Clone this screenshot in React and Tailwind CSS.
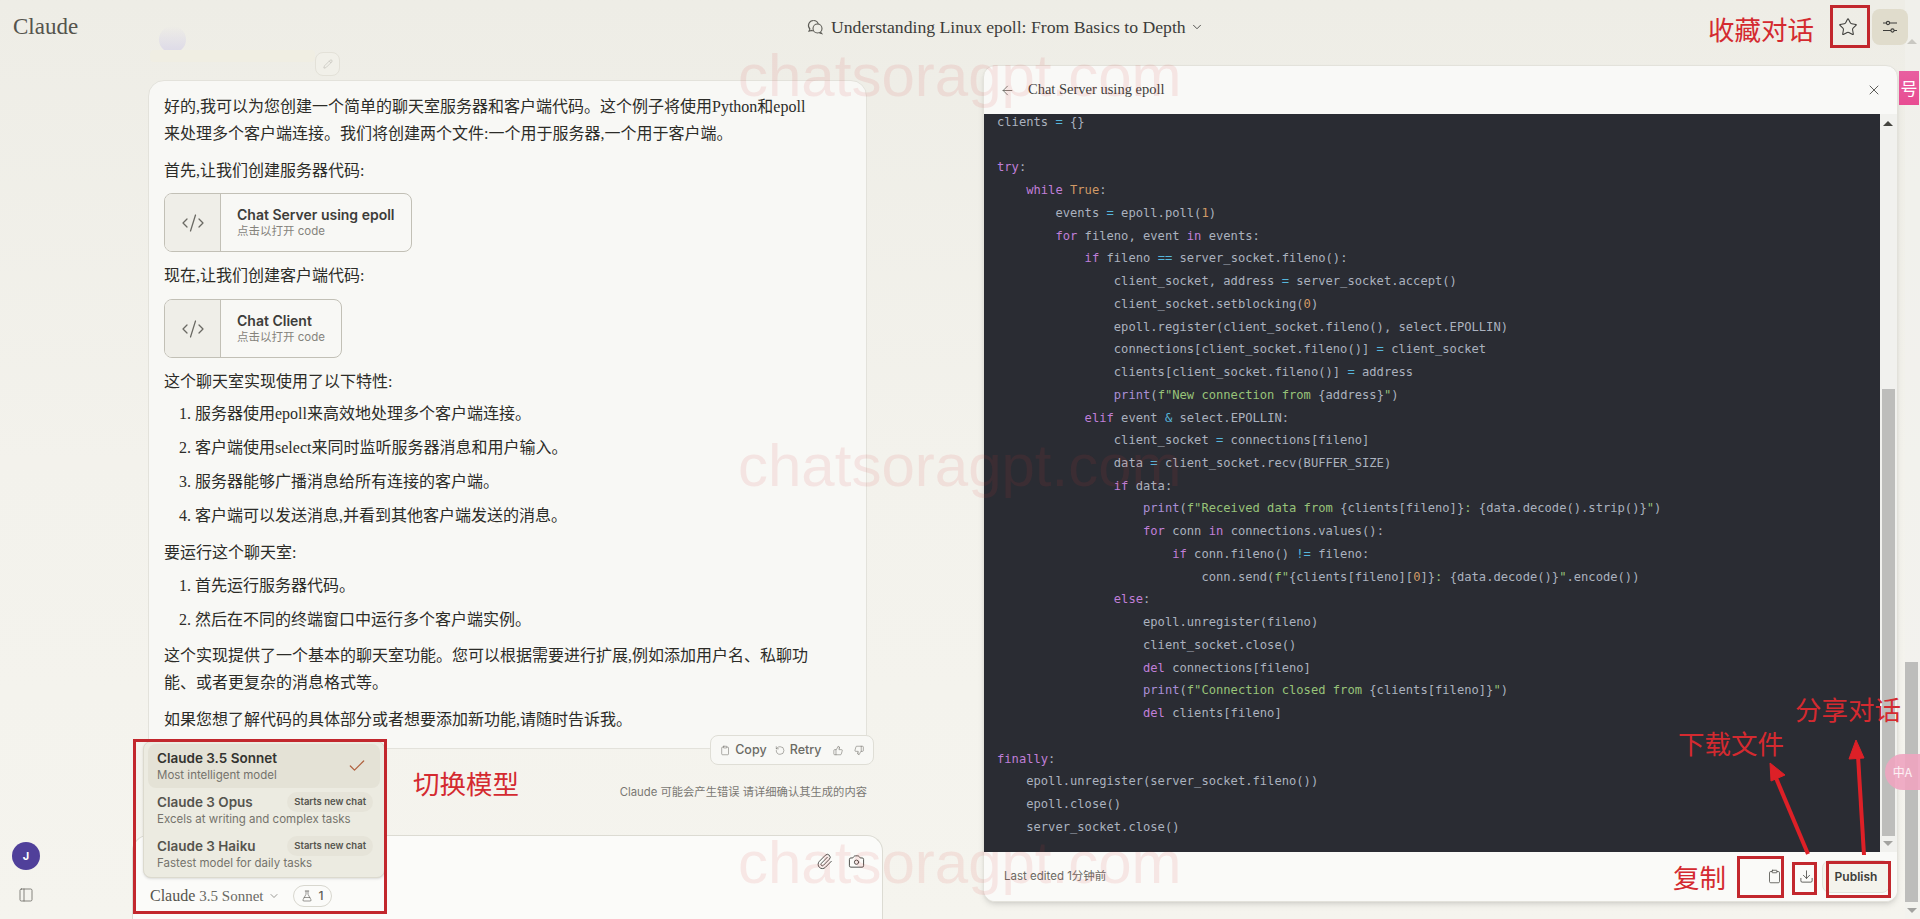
import { ArrowLeft, Camera, Check, ChevronDown, Clipboard, CodeXml, Download, FlaskConical, PanelLeft, Paperclip, Pencil, RotateCcw, Star, ThumbsDown, ThumbsUp, X } from "lucide-react";

const serif = "font-['Liberation_Serif','Noto_Sans_CJK_SC',serif]";
const sans = "font-['Inter','Noto_Sans_CJK_SC',sans-serif]";

const tokenColors = {
    k: "text-[#c07fd8]",
    n: "text-[#d19a66]",
    s: "text-[#98c379]",
    o: "text-[#56b6dc]",
    p: "text-[#a98fd6]",
};

const codeLines = [
    "clients ‹o|=› {}",
    "",
    "‹k|try›:",
    "    ‹k|while› ‹n|True›:",
    "        events ‹o|=› epoll.poll(‹n|1›)",
    "        ‹k|for› fileno, event ‹k|in› events:",
    "            ‹k|if› fileno ‹o|==› server_socket.fileno():",
    "                client_socket, address ‹o|=› server_socket.accept()",
    "                client_socket.setblocking(‹n|0›)",
    "                epoll.register(client_socket.fileno(), select.EPOLLIN)",
    "                connections[client_socket.fileno()] ‹o|=› client_socket",
    "                clients[client_socket.fileno()] ‹o|=› address",
    "                ‹p|print›(‹s|f\"New connection from ›{address}‹s|\"›)",
    "            ‹k|elif› event ‹o|&› select.EPOLLIN:",
    "                client_socket ‹o|=› connections[fileno]",
    "                data ‹o|=› client_socket.recv(BUFFER_SIZE)",
    "                ‹k|if› data:",
    "                    ‹p|print›(‹s|f\"Received data from ›{clients[fileno]}‹s|: ›{data.decode().strip()}‹s|\"›)",
    "                    ‹k|for› conn ‹k|in› connections.values():",
    "                        ‹k|if› conn.fileno() ‹o|!=› fileno:",
    "                            conn.send(‹s|f\"›{clients[fileno][‹n|0›]}‹s|: ›{data.decode()}‹s|\"›.encode())",
    "                ‹k|else›:",
    "                    epoll.unregister(fileno)",
    "                    client_socket.close()",
    "                    ‹k|del› connections[fileno]",
    "                    ‹p|print›(‹s|f\"Connection closed from ›{clients[fileno]}‹s|\"›)",
    "                    ‹k|del› clients[fileno]",
    "",
    "‹k|finally›:",
    "    epoll.unregister(server_socket.fileno())",
    "    epoll.close()",
    "    server_socket.close()",
];

const CodeLine = ({ line }) => {
    const parts = line.split(/‹(\w)\|(.*?)›/);
    const out = [];
    for (let i = 0; i < parts.length; i += 3) {
        if (parts[i]) out.push(<span key={i}>{parts[i]}</span>);
        if (parts[i + 1]) out.push(<span key={i + 1} className={tokenColors[parts[i + 1]]}>{parts[i + 2]}</span>);
    }
    return <div className="h-[22.74px] whitespace-pre">{out}</div>;
};

const ArtifactCard = ({ title, width }) => (
    <div className={`flex h-[59px] ${width} rounded-lg border border-[#c2c0b6] overflow-hidden`}>
        <div className="w-[56px] bg-[#efeee8] border-r border-[#c2c0b6] flex items-center justify-center text-[#6a6963]">
            <CodeXml size={24} strokeWidth={1.25} />
        </div>
        <div className="pl-4 flex flex-col justify-center">
            <div className={`${sans} text-sm font-semibold leading-[18px] text-[#3d3d3a]`}>{title}</div>
            <div className={`${sans} text-[11.5px] leading-[15px] text-[#85837c]`}>点击以打开 code</div>
        </div>
    </div>
);

const ModelRow = ({ name, desc, selected }) => (
    <div className={`relative h-[44px] px-[9px] flex items-center justify-between rounded-lg whitespace-nowrap ${selected ? "bg-[#e4e2d6]" : ""}`}>
        <div>
            <div className={`${sans} text-[13.5px] font-semibold leading-[18px] ${selected ? "text-[#33332f]" : "text-[#55544e]"}`}>{name}</div>
            <div className={`${sans} text-[11.5px] leading-[17px] text-[#75736c]`}>{desc}</div>
        </div>
        {selected && <Check size={20} strokeWidth={1.5} className="text-[#b0623f] mr-[4px]" />}
        {!selected && (
            <span className={`${sans} absolute right-[7px] top-[4px] px-[7px] h-[20px] flex items-center rounded-full bg-[#e6e4d9] text-[9.5px] font-semibold text-[#55544e]`}>Starts new chat</span>
        )}
    </div>
);

const RedBox = ({ className }) => <div className={`absolute border-[3px] border-[#c2272d] pointer-events-none ${className}`} />;
const RedLabel = ({ className, children }) => (
    <div className={`absolute font-['Noto_Sans_CJK_SC',sans-serif] text-[26.5px] leading-[32px] text-[#d42a30] whitespace-nowrap ${className}`}>{children}</div>
);
const Watermark = ({ className }) => (
    <div className={`absolute left-[738px] font-['Liberation_Sans',sans-serif] text-[60px] leading-[70px] text-[#dc3c3c]/10 whitespace-nowrap pointer-events-none ${className}`}>chatsoragpt.com</div>
);

const ScrollArrow = ({ up, className }) => (
    <div className={`absolute w-0 h-0 border-x-[5px] border-x-transparent ${up ? "border-b-[5px] border-b-[#44443f]" : "border-t-[5px] border-t-[#a3a3a0]"} ${className}`} />
);

export default function App() {
    return (
        <div className="relative w-full h-[919px] overflow-hidden flex flex-col bg-gradient-to-b from-[#eeede6] via-[#f3f2ec] to-[#f5f4ee]">
            <header className="relative z-10 h-[65px] shrink-0 flex items-start pl-[13px] pr-[12px] pt-[9px]">
                <div className={`${serif} w-[65px] text-[23px] leading-[36px] text-[#55544d]`}>Claude</div>
                <div className="flex items-center h-[36px] gap-[7px] text-[#3d3d3a] ml-[728px]">
                    <svg width="18" height="18" viewBox="0 0 18 18" fill="none" stroke="#5d5c56" strokeWidth="1.1">
                        <path d="M7.5 2.5a5 5 0 0 0-3.6 8.5L3 13.2l2.6-.8a5 5 0 0 0 1.9.4" />
                        <path d="M7.5 2.5a5 5 0 0 1 4.8 3.6" />
                        <circle cx="11.5" cy="10.5" r="4.5" />
                        <path d="M14.5 14l1.2 1.5-2.3-.6" />
                    </svg>
                    <span className={`${serif} text-[17.7px] leading-[36px]`}>Understanding Linux epoll: From Basics to Depth</span>
                    <ChevronDown size={14} strokeWidth={1.5} className="-ml-[3px]" />
                </div>
                <div className="ml-auto flex items-center gap-[14px]">
                    <Star size={20} strokeWidth={1.25} className="text-[#3d3d3a]" />
                    <div className="w-[36px] h-[36px] rounded-lg bg-[#e0dccc] flex items-center justify-center">
                        <svg width="18" height="18" viewBox="0 0 18 18" fill="none" stroke="#3d3d3a" strokeWidth="1.1">
                            <path d="M2 5h3.5M8.5 5H16M2 12.5h8M13 12.5h3" />
                            <circle cx="7" cy="5" r="1.6" />
                            <circle cx="11.5" cy="12.5" r="1.6" />
                        </svg>
                    </div>
                </div>
            </header>

            <main className="flex flex-1 min-h-0">
                <div className="w-[132px] shrink-0 flex flex-col justify-end gap-[17px] pl-[12px] pb-[16px]">
                    <div className={`${sans} w-[28px] h-[28px] rounded-full bg-[#50409a] text-white text-[11px] font-bold flex items-center justify-center`}>J</div>
                    <PanelLeft size={16} strokeWidth={1.1} className="ml-[6px] text-[#5d5c56]" />
                </div>

                <div className="relative w-[751px] shrink-0 flex flex-col">
                    {/* user message fading out under the header */}
                    <div className="absolute z-20 left-[27px] -top-[39px] w-[27px] h-[27px] rounded-full bg-gradient-to-b from-transparent to-[#dcd9e8]" />
                    <div className="absolute z-20 left-[18px] -top-[15px] w-[165px] h-[12px] bg-[#f0eee3] rounded" />
                    <div className="absolute z-20 left-[183px] -top-[13px] w-[25px] h-[24px] rounded-lg border border-[#e3e1d8] bg-[#f1f0e9] flex items-center justify-center">
                        <Pencil size={10} strokeWidth={1} className="text-[#a5a39b]" />
                    </div>

                    <div className={`${serif} ml-[16px] mt-[15px] w-[719px] h-[669px] shrink-0 rounded-t-2xl border border-b border-[#e3e2db] bg-[#f8f8f5] px-[15px] pt-[12px] text-[16px] leading-[27px] text-[#2c2c28]`}>
                        <p className="mb-[9.5px]">好的,我可以为您创建一个简单的聊天室服务器和客户端代码。这个例子将使用Python和epoll<br />来处理多个客户端连接。我们将创建两个文件:一个用于服务器,一个用于客户端。</p>
                        <p className="mb-[9.5px]">首先,让我们创建服务器代码:</p>
                        <ArtifactCard title="Chat Server using epoll" width="w-[248px]" />
                        <p className="mt-[10px] mb-[10px]">现在,让我们创建客户端代码:</p>
                        <ArtifactCard title="Chat Client" width="w-[178px]" />
                        <p className="mt-[10px] mb-[5px]">这个聊天室实现使用了以下特性:</p>
                        <ol className="list-decimal pl-[31px] flex flex-col gap-[7px]">
                            <li>服务器使用epoll来高效地处理多个客户端连接。</li>
                            <li>客户端使用select来同时监听服务器消息和用户输入。</li>
                            <li>服务器能够广播消息给所有连接的客户端。</li>
                            <li>客户端可以发送消息,并看到其他客户端发送的消息。</li>
                        </ol>
                        <p className="mt-[10px] mb-[6px]">要运行这个聊天室:</p>
                        <ol className="list-decimal pl-[31px] flex flex-col gap-[7px]">
                            <li>首先运行服务器代码。</li>
                            <li>然后在不同的终端窗口中运行多个客户端实例。</li>
                        </ol>
                        <p className="mt-[9px] mb-[10px]">这个实现提供了一个基本的聊天室功能。您可以根据需要进行扩展,例如添加用户名、私聊功<br />能、或者更复杂的消息格式等。</p>
                        <p>如果您想了解代码的具体部分或者想要添加新功能,请随时告诉我。</p>
                    </div>

                    <div className={`${sans} absolute left-[578px] top-[670px] h-[30px] w-[164px] rounded-lg border border-[#dfded6] bg-[#f8f8f5] flex items-center gap-[5px] px-[9px] text-[12.5px] font-medium text-[#6b6a64]`}>
                        <Clipboard size={13} strokeWidth={1.25} />
                        <span>Copy</span>
                        <RotateCcw size={13} strokeWidth={1.25} className="ml-[3px]" />
                        <span>Retry</span>
                        <ThumbsUp size={13} strokeWidth={1.25} className="ml-[6px]" />
                        <ThumbsDown size={13} strokeWidth={1.25} className="ml-[6px]" />
                    </div>

                    <div className={`${sans} mt-[33px] pr-[16px] text-right text-[11.3px] leading-[20px] text-[#7a7873]`}>Claude 可能会产生错误 请详细确认其生成的内容</div>

                    <div className="mt-[33px] flex-1 relative rounded-t-2xl border border-b-0 border-[#dcdbd3] bg-[#fbfbf9]">
                        <div className="flex justify-end gap-[15px] pt-[17px] pr-[17px] text-[#3d3d3a]">
                            <Paperclip size={17} strokeWidth={1.25} />
                            <Camera size={17} strokeWidth={1.25} />
                        </div>
                        <div className="absolute left-[17px] top-[49px] flex items-center text-[#5d5c56]">
                            <span className={`${serif} text-[16px] leading-[22px] text-[#55544d]`}>Claude</span>
                            <span className={`${serif} ml-[4px] text-[15px] leading-[22px] text-[#6a6963]`}>3.5 Sonnet</span>
                            <ChevronDown size={12} strokeWidth={1.25} className="ml-[4px]" />
                            <div className={`${sans} ml-[13px] w-[39px] h-[22px] rounded-full border border-[#d8d7cf] flex items-center justify-center gap-[6px] text-[12px] font-medium`}>
                                <FlaskConical size={12} strokeWidth={1.25} />1
                            </div>
                        </div>
                    </div>

                    <div className="absolute left-[11px] top-[676px] w-[242px] h-[137px] rounded-lg border border-[#dcdace] bg-[#ecebe1] shadow-sm px-[4px] pt-[2px] flex flex-col">
                        <ModelRow name="Claude 3.5 Sonnet" desc="Most intelligent model" selected />
                        <ModelRow name="Claude 3 Opus" desc="Excels at writing and complex tasks" />
                        <ModelRow name="Claude 3 Haiku" desc="Fastest model for daily tasks" />
                    </div>
                </div>

                <div className="ml-[100px] w-[915px] h-[837px] shrink-0 rounded-xl border border-[#e3e2db] bg-[#f9f9f7] shadow-md overflow-hidden flex flex-col">
                    <div className="h-[48px] shrink-0 flex items-center pl-[16px] pr-[15px] text-[#5d5c56]">
                        <ArrowLeft size={15} strokeWidth={1.25} />
                        <span className={`${serif} ml-[13px] text-[14.5px] text-[#3d3d3a]`}>Chat Server using epoll</span>
                        <X size={16} strokeWidth={1.25} className="ml-auto text-[#3d3d3a]" />
                    </div>
                    <div className="flex flex-1 min-h-0">
                        <div className="flex-1 overflow-hidden bg-[#2a2c33] pl-[13px] font-['DejaVu_Sans_Mono',monospace] text-[12.13px] leading-[22.74px] text-[#abb2bf]">
                            <div className="-mt-[3px]">
                                {codeLines.map((line, i) => <CodeLine key={i} line={line} />)}
                            </div>
                        </div>
                        <div className="relative w-[17px] shrink-0 bg-[#f1f1ee]">
                            <ScrollArrow up className="left-[3px] top-[7px]" />
                            <div className="absolute left-[2px] top-[275px] w-[13px] h-[447px] bg-[#bdbdbb]" />
                            <ScrollArrow className="left-[3px] top-[727px]" />
                        </div>
                    </div>
                    <div className="h-[49px] shrink-0 flex items-center pl-[20px] pr-[7px] bg-[#fafaf8]">
                        <span className={`${sans} text-[11.5px] text-[#6a6963]`}>Last edited 1分钟前</span>
                        <Clipboard size={15} strokeWidth={1.25} className="ml-auto text-[#4a4a45]" />
                        <Download size={15} strokeWidth={1.25} className="ml-[17px] text-[#3d3d3a]" />
                        <div className={`${sans} ml-[8px] w-[68px] h-[33px] rounded-lg border border-[#e3e2db] bg-[#f4f3ec] flex items-center justify-center text-[12px] font-semibold text-[#3d3d3a]`}>Publish</div>
                    </div>
                </div>
            </main>

            {/* page scrollbar */}
            <div className="absolute top-0 right-0 bottom-0 w-[15px] bg-[#f1f1ee]/60">
                <ScrollArrow up className="left-[2px] top-[39px] !border-b-[#c9c8c2]" />
                <div className="absolute right-[2px] top-[662px] w-[13px] h-[240px] bg-[#bdbdbb]" />
                <ScrollArrow className="left-[2px] top-[908px]" />
            </div>

            {/* browser extension tabs */}
            <div className="absolute right-[1px] top-[71px] w-[20px] h-[34px] overflow-hidden bg-gradient-to-b from-[#e85fa0] to-[#e84c92] text-white text-[17px] leading-[34px] text-center font-['Noto_Sans_CJK_SC',sans-serif]">号</div>
            <div className="absolute right-0 top-[754px] w-[35px] h-[36px] rounded-l-full bg-[#eea4c0]/90 text-white/85 text-[12px] leading-[36px] text-center font-['Noto_Sans_CJK_SC',sans-serif]">中A</div>

            {/* annotations drawn over the screenshot */}
            <RedBox className="left-[1830px] top-[5px] w-[40px] h-[43px]" />
            <RedBox className="left-[133px] top-[739px] w-[254px] h-[175px]" />
            <RedBox className="left-[1737px] top-[856px] w-[47px] h-[42px]" />
            <RedBox className="left-[1792px] top-[862px] w-[25px] h-[33px]" />
            <RedBox className="left-[1826px] top-[861px] w-[65px] h-[37px]" />
            <RedLabel className="left-[1708px] top-[13px]">收藏对话</RedLabel>
            <RedLabel className="left-[413px] top-[767px]">切换模型</RedLabel>
            <RedLabel className="left-[1673px] top-[861px]">复制</RedLabel>
            <RedLabel className="left-[1678px] top-[727px]">下载文件</RedLabel>
            <RedLabel className="left-[1795px] top-[693px]">分享对话</RedLabel>
            <svg className="absolute left-[1760px] top-[730px] pointer-events-none" width="120" height="130" viewBox="1760 730 120 130">
                <path d="M1808 854L1776 778" stroke="#dd2027" strokeWidth="4" />
                <path d="M1770 763l15 12-14 6z" fill="#dd2027" stroke="#dd2027" strokeWidth="1" />
                <path d="M1864 855L1858 756" stroke="#dd2027" strokeWidth="4" />
                <path d="M1856 740l8 18-15 1z" fill="#dd2027" stroke="#dd2027" strokeWidth="1" />
            </svg>

            <Watermark className="top-[41px]" />
            <Watermark className="top-[431px]" />
            <Watermark className="top-[828px]" />
        </div>
    );
}
